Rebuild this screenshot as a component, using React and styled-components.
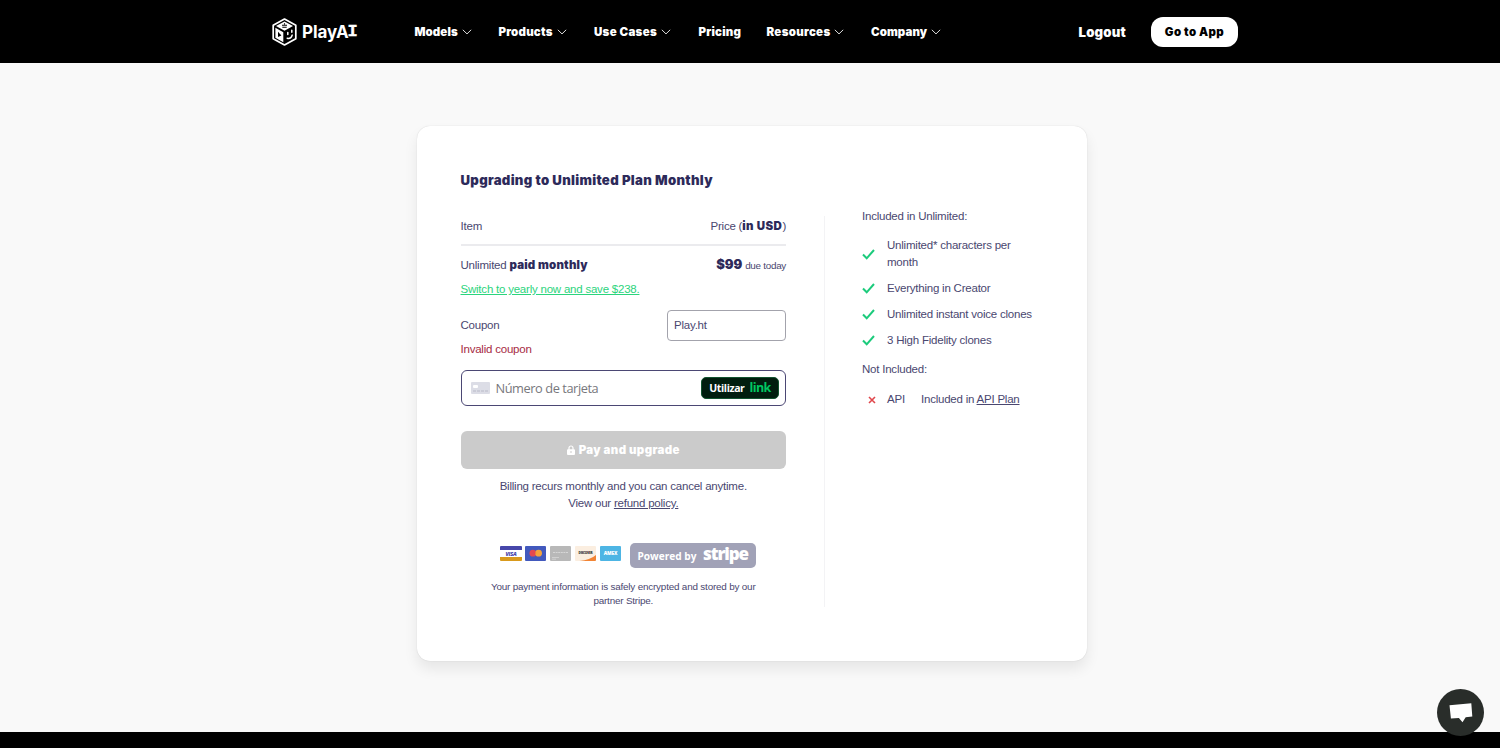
import React from "react";
import styled, { createGlobalStyle } from "styled-components";

const Global = createGlobalStyle`
  * { box-sizing: border-box; }
  html, body { height: 100%; overflow: hidden; }
  body { margin: 0; background: #f9f9f9; color: #4a4770; font: 11.5px/17px "Liberation Sans", Arial, sans-serif; letter-spacing: -0.22px; }
  #root { height: 100%; }
`;

const Page = styled.div`
  height: 748px;
  display: flex;
  flex-direction: column;
`;
const Header = styled.header`
  flex: none;
  height: 63px;
  padding: 0 262px 0 272px;
  background: #000;
  color: #fff;
  display: flex;
  align-items: center;
`;
const Brand = styled.div`
  width: 142.5px;
  display: flex;
  align-items: center;
  gap: 5px;
  font: 700 17px/20px Inter, sans-serif;
  letter-spacing: -0.1px;
`;
const BrandName = styled.span`
  display: flex;
  align-items: center;
`;
const Nav = styled.nav`
  flex: 1;
  display: flex;
`;
const NavItem = styled.a`
  width: ${(p) => p.$width}px;
  display: flex;
  align-items: center;
  gap: 4px;
  white-space: nowrap;
  font: 900 11.5px/16px Inter, sans-serif;
  letter-spacing: ${(p) => p.$spacing}px;
`;
const Logout = styled.a`
  margin-right: 25px;
  font: 900 13.2px/18px Inter, sans-serif;
  letter-spacing: 0.2px;
`;
const AppButton = styled.button`
  width: 87px;
  height: 30px;
  padding: 0;
  border: 0;
  border-radius: 12px;
  background: #fff;
  color: #000;
  font: 900 11.5px/16px Inter, sans-serif;
  letter-spacing: 0.35px;
`;
const Main = styled.main`
  flex: 1;
  padding: 63px 0 0 417px;
`;
const Card = styled.section`
  width: 670px;
  height: 535px;
  padding: 44px 44px 44px 43.5px;
  border-radius: 13px;
  background: #fff;
  box-shadow: 0 0 1px rgba(0, 0, 0, 0.2), 0 8px 14px rgba(0, 0, 0, 0.08);
  display: flex;
  flex-direction: column;
`;
const Title = styled.h1`
  margin: 0;
  color: #2d2a5a;
  font: 900 13.2px/20px Inter, sans-serif;
  letter-spacing: 0.3px;
`;
const Columns = styled.div`
  flex: 1;
  display: flex;
`;
const Checkout = styled.div`
  width: 325.5px;
  display: flex;
  flex-direction: column;
`;
const Line = styled.div`
  display: flex;
  justify-content: space-between;
  align-items: ${(p) => p.$align || "center"};
`;
const HeadLine = styled(Line)`
  height: 46px;
  margin-top: 10px;
  padding-top: 9px;
  border-bottom: 2px solid #ebebee;
`;
const PlanLine = styled(Line)`
  height: 20px;
  margin-top: 10px;
`;
const Strong = styled.b`
  color: #2d2a5a;
  font: 900 ${(p) => p.$size || 11.5}px/16px Inter, sans-serif;
  letter-spacing: ${(p) => p.$spacing}px;
`;
const Small = styled.span`
  font-size: 9.9px;
  letter-spacing: -0.28px;
`;
const YearlyLink = styled.a`
  margin-top: 5px;
  align-self: flex-start;
  color: #2bd47d;
  text-decoration: underline;
`;
const CouponLine = styled(Line)`
  margin-top: 12px;
`;
const CouponInput = styled.div`
  width: 119px;
  height: 31px;
  padding: 0 6px;
  border: 1px solid #a3a3ac;
  border-radius: 4px;
  display: flex;
  align-items: center;
`;
const ErrorText = styled.p`
  margin: 0;
  color: #a62a43;
`;
const CardField = styled.div`
  height: 36px;
  margin-top: 12px;
  padding: 0 6px 0 9px;
  border: 1px solid #4b4774;
  border-radius: 6px;
  display: flex;
  align-items: center;
`;
const CardPlaceholder = styled.span`
  flex: 1;
  margin-left: 6px;
  color: #77777c;
  font: 12.8px/18px "Open Sans", sans-serif;
  letter-spacing: -0.43px;
`;
const LinkButton = styled.button`
  width: 78px;
  height: 22px;
  padding: 0 0 1px;
  border: 1px solid #11542f;
  border-radius: 5px;
  background: #011e0f;
  color: #fff;
  font: 700 10.5px/14px "Open Sans", sans-serif;
  letter-spacing: -0.4px;
  display: flex;
  align-items: center;
  justify-content: center;
  gap: 5px;
`;
const LinkWord = styled.span`
  color: #00c761;
  font-weight: 700;
  font-size: 12.5px;
  letter-spacing: -0.6px;
`;
const PayButton = styled.button`
  height: 38px;
  margin-top: 25px;
  padding: 0 0 1px;
  border: 0;
  border-radius: 6px;
  background: #cbcbcb;
  color: #fff;
  font: 900 11.5px/16px Inter, sans-serif;
  letter-spacing: 0.35px;
  display: flex;
  align-items: center;
  justify-content: center;
  gap: 4px;
`;
const Billing = styled.p`
  margin: 9px 0 0;
  text-align: center;
`;
const TextLink = styled.a`
  text-decoration: underline;
`;
const PaymentBrands = styled.div`
  margin: 31px 0 0 39px;
  display: flex;
  align-items: flex-start;
  gap: 8px;
`;
const CardIcons = styled.div`
  padding-top: 3px;
  display: flex;
  gap: 3px;
`;
const StripeBadge = styled.div`
  width: 126.5px;
  height: 25px;
  padding: 0 8px;
  border-radius: 5px;
  background: #a1a2b7;
  color: #fff;
  display: flex;
  align-items: center;
  justify-content: space-between;
  font: 700 10.1px/14px "Open Sans", sans-serif;
  letter-spacing: 0;
`;
const StripeWord = styled.span`
  margin-top: -4px;
  font-size: 17px;
  font-weight: 800;
  letter-spacing: -1.1px;
`;
const Security = styled.p`
  margin: 12px 0 0;
  font-size: 9.9px;
  letter-spacing: -0.19px;
  line-height: 14px;
  text-align: center;
`;
const Divider = styled.div`
  width: 1px;
  height: 391px;
  margin: 26px 37px 0 38px;
  background: #f3f3f5;
`;
const Features = styled.aside`
  padding-top: 18px;
`;
const Heading = styled.p`
  margin: ${(p) => p.$top || 0}px 0 0;
`;
const FeatureList = styled.ul`
  margin: 12px 0 0;
  padding: 0;
  list-style: none;
  display: flex;
  flex-direction: column;
  gap: 9px;
`;
const Feature = styled.li`
  width: 175px;
  display: flex;
  align-items: center;
  gap: 12px;
`;
const FeatureText = styled.span`
  max-width: ${(p) => (p.$wrap ? "140px" : "none")};
  white-space: ${(p) => (p.$wrap ? "normal" : "nowrap")};
`;
const Missing = styled.div`
  margin-top: 13px;
  padding-left: 6px;
  display: flex;
  align-items: center;
`;
const MissingName = styled.span`
  width: 34px;
  margin-left: 11px;
`;
const Footer = styled.footer`
  height: 16px;
  background: #000;
`;
const Chat = styled.button`
  position: fixed;
  right: 16px;
  bottom: 12px;
  width: 47px;
  height: 47px;
  padding: 0;
  border: 0;
  border-radius: 50%;
  background: #292d2a;
  display: grid;
  place-items: center;
`;

const Cube = () => (
  <svg width="25" height="28" viewBox="0 0 25 28" fill="none" stroke="#fff">
    <path d="M12.5 1 23.8 7.3v13.4L12.5 27 1.2 20.7V7.3z" strokeWidth="1.7" strokeLinejoin="round" />
    <path d="M12.5 3.4 21 8.1l-8.5 4.7L4 8.1z" fill="#fff" stroke="none" />
    <path d="M3.4 9.8l7.9 4.4v10L3.400 19.8z" fill="#fff" stroke="none" />
    <path d="M6 13.7l3.4 3.7L6 19z" fill="#000" stroke="none" />
    <path d="M10 7.2h5M12.5 5.2v1.2M10.3 9.3h4.4" stroke="#000" strokeWidth="1.1" />
    <path d="M15.8 14.4v2M19.8 12.3v2M15.2 20.3q3.8 1 5-3.2" strokeWidth="1.5" strokeLinecap="round" />
  </svg>
);
const SerifI = styled.span`
  margin: 1px 0 0 -1px;
  font: 700 17px/20px "Liberation Mono", monospace;
  -webkit-text-stroke: 0.4px #fff;
`;
const Chevron = () => (
  <svg width="10" height="6" viewBox="0 0 10 6" fill="none" stroke="#ddd">
    <path d="M.8.8 5 4.9 9.2.8" />
  </svg>
);
const Check = () => (
  <svg width="13" height="11" viewBox="0 0 13 11" fill="none" stroke="#1ccb7c" strokeWidth="2">
    <path d="M1 5.5 4.7 9.3 12 1" />
  </svg>
);
const Cross = () => (
  <svg width="8" height="8" viewBox="0 0 8 8" stroke="#e0474c" strokeWidth="1.6">
    <path d="M1 1l6 6M7 1 1 7" />
  </svg>
);
const Lock = () => (
  <svg width="8" height="10" viewBox="0 0 8 10" fill="none">
    <path d="M2 5V3a2 2 0 0 1 4 0v2" stroke="#fff" strokeWidth="1.2" />
    <rect y="4.3" width="8" height="5.7" rx="1" fill="#fff" />
    <path d="M4 6v2" stroke="#cbcbcb" />
  </svg>
);
const BlankCard = () => (
  <svg width="19" height="12" viewBox="0 0 19 12">
    <rect width="19" height="12" rx="1" fill="#dcdde6" />
    <rect x="2" y="3" width="5" height="3" rx="1" fill="#fff" />
    <path d="M2 9h15" stroke="#b9bac8" strokeDasharray="3 1" />
  </svg>
);
const BrandText = styled.text`
  font: ${(p) => (p.$italic ? "italic " : "")}800 ${(p) => p.$size}px "Open Sans", sans-serif;
  text-anchor: middle;
`;
const Svg = (p) => <svg width="22" height="15" viewBox="0 0 22 15" {...p} />;
const Visa = () => (
  <Svg>
    <rect width="22" height="15" rx="1" fill="#fff" />
    <path d="M0 4V1q0-1 1-1h20q1 0 1 1v3z" fill="#4747aa" />
    <path d="M0 11h22v3q0 1-1 1H1q-1 0-1-1z" fill="#d99a1c" />
    <BrandText x="11" y="9.7" $size={5.5} $italic fill="#4747aa">VISA</BrandText>
  </Svg>
);
const Mastercard = () => (
  <Svg>
    <rect width="21" height="15" rx="1" fill="#4259bd" />
    <circle cx="7.9" cy="7.2" r="3.4" fill="#e44850" />
    <circle cx="13.6" cy="7.2" r="3.4" fill="#f4a33c" />
    <path d="M10.7 5.2q1.1 2 0 4-1.1-2 0-4" fill="#ed7138" />
  </Svg>
);
const GreyCard = () => (
  <Svg>
    <rect width="21" height="15" rx="1" fill="#b8b8b8" />
    <path d="M3 6.5h15" stroke="#d6d6d6" strokeDasharray="2 .6" />
    <path d="M2 11.5h7M2 13.2h4" stroke="#d6d6d6" strokeWidth=".8" />
  </Svg>
);
const Discover = () => (
  <Svg>
    <rect width="21" height="15" rx="1" fill="#fbeee0" />
    <path d="M21 9v5q0 1-1 1H4.500Q15 14 21 9" fill="#f28434" />
    <BrandText x="10.5" y="8" $size={3.1} fill="#333">DISCOVER</BrandText>
  </Svg>
);
const Amex = () => (
  <Svg>
    <rect width="21" height="15" rx="1" fill="#4db5e4" />
    <BrandText x="10.5" y="9.4" $size={4.8} fill="#fff">AMEX</BrandText>
  </Svg>
);

const nav = [
  { label: "Models", width: 84, spacing: 0.08, menu: true },
  { label: "Products", width: 95.5, spacing: 0.22, menu: true },
  { label: "Use Cases", width: 104.5, spacing: 0.3, menu: true },
  { label: "Pricing", width: 68, spacing: 0.22 },
  { label: "Resources", width: 104.5, spacing: 0.3, menu: true },
  { label: "Company", width: 80, spacing: 0.08, menu: true },
];
const included = [
  { text: "Unlimited* characters per month", wrap: true },
  { text: "Everything in Creator" },
  { text: "Unlimited instant voice clones" },
  { text: "3 High Fidelity clones" },
];

export default function App() {
  return (
    <Page>
      <Global />
      <Header>
        <Brand>
          <Cube />
          <BrandName>PlayA<SerifI>I</SerifI></BrandName>
        </Brand>
        <Nav>
          {nav.map((n) => (
            <NavItem key={n.label} $width={n.width} $spacing={n.spacing}>
              {n.label}
              {n.menu && <Chevron />}
            </NavItem>
          ))}
        </Nav>
        <Logout>Logout</Logout>
        <AppButton>Go to App</AppButton>
      </Header>
      <Main>
        <Card>
          <Title>Upgrading to Unlimited Plan Monthly</Title>
          <Columns>
            <Checkout>
              <HeadLine>
                <span>Item</span>
                <span>Price (<Strong $spacing={0.45}>in USD</Strong>)</span>
              </HeadLine>
              <PlanLine $align="baseline">
                <span>Unlimited <Strong $spacing={0.2}>paid monthly</Strong></span>
                <span><Strong $size={13} $spacing={-0.1}>$99</Strong> <Small>due today</Small></span>
              </PlanLine>
              <YearlyLink>Switch to yearly now and save $238.</YearlyLink>
              <CouponLine>
                <span>Coupon</span>
                <CouponInput>Play.ht</CouponInput>
              </CouponLine>
              <ErrorText>Invalid coupon</ErrorText>
              <CardField>
                <BlankCard />
                <CardPlaceholder>Número de tarjeta</CardPlaceholder>
                <LinkButton>Utilizar <LinkWord>link</LinkWord></LinkButton>
              </CardField>
              <PayButton><Lock />Pay and upgrade</PayButton>
              <Billing>
                Billing recurs monthly and you can cancel anytime.<br />
                View our <TextLink>refund policy.</TextLink>
              </Billing>
              <PaymentBrands>
                <CardIcons><Visa /><Mastercard /><GreyCard /><Discover /><Amex /></CardIcons>
                <StripeBadge>Powered by <StripeWord>stripe</StripeWord></StripeBadge>
              </PaymentBrands>
              <Security>
                Your payment information is safely encrypted and stored by our<br />partner Stripe.
              </Security>
            </Checkout>
            <Divider />
            <Features>
              <Heading>Included in Unlimited:</Heading>
              <FeatureList>
                {included.map((f) => (
                  <Feature key={f.text}>
                    <Check />
                    <FeatureText $wrap={f.wrap}>{f.text}</FeatureText>
                  </Feature>
                ))}
              </FeatureList>
              <Heading $top={12}>Not Included:</Heading>
              <Missing>
                <Cross />
                <MissingName>API</MissingName>
                <span>Included in <TextLink>API Plan</TextLink></span>
              </Missing>
            </Features>
          </Columns>
        </Card>
      </Main>
      <Footer />
      <Chat aria-label="Chat">
        <svg width="24" height="20" viewBox="0 0 24 20">
          <path d="M.5 2.2 22.3.3l1 13.2-6.6.7-3.2 5-3.6-4.3-8 .7z" fill="#fff" />
        </svg>
      </Chat>
    </Page>
  );
}
